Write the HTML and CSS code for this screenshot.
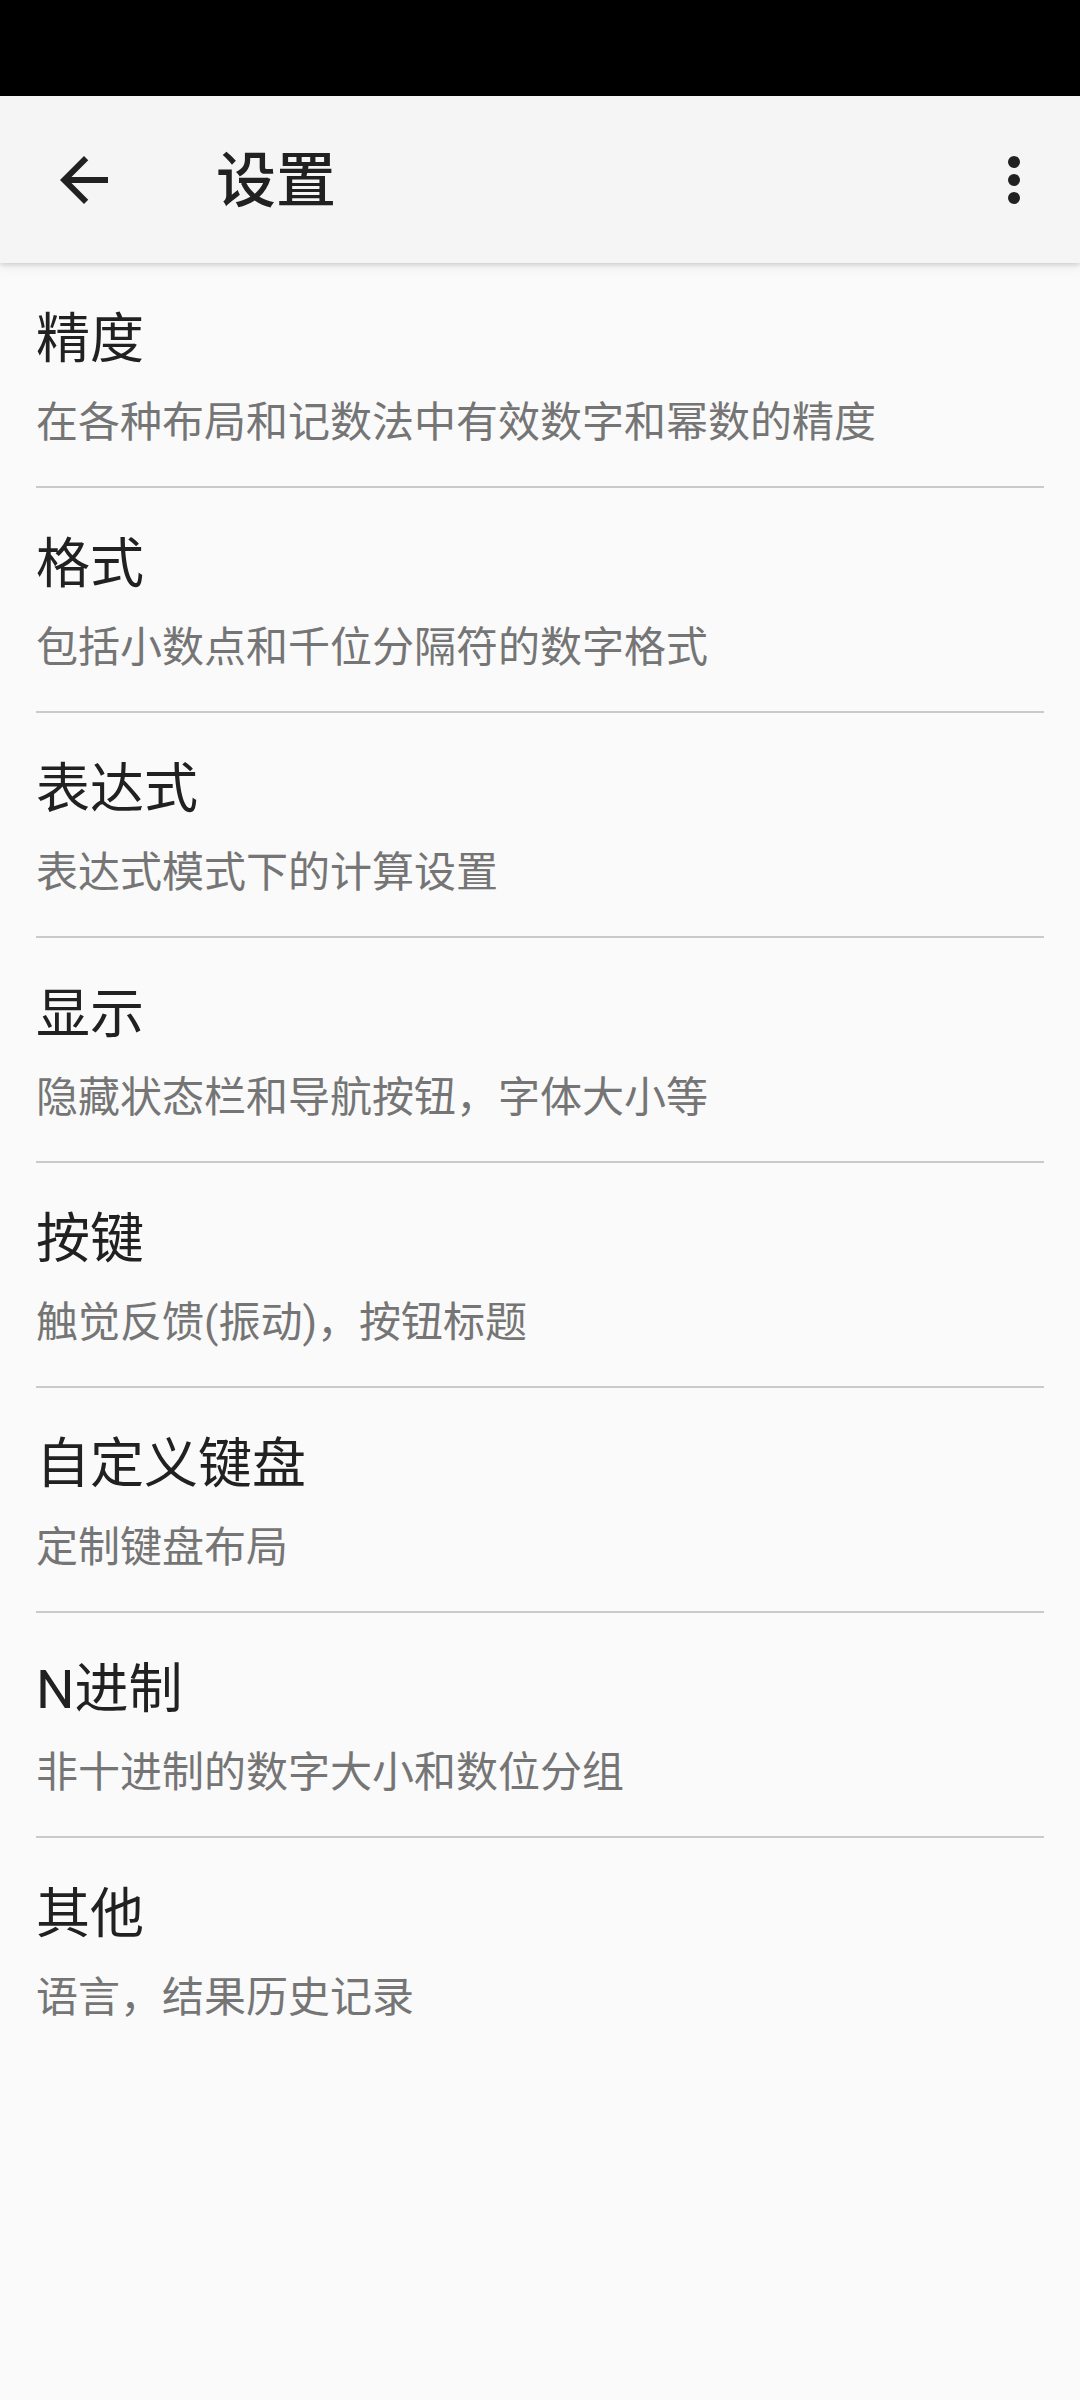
FILE: index.html
```html
<!DOCTYPE html>
<html lang="zh-CN">
<head>
    <meta charset="UTF-8">
    <meta name="viewport" content="width=device-width, initial-scale=1.0">
    <title>设置</title>
    <link rel="stylesheet" href="styles.css">
</head>
<body>
    <div class="status-bar"></div>

    <div class="app-bar">
        <button class="icon-btn back-btn" aria-label="返回">
            <svg viewBox="0 0 24 24" width="72" height="72">
                <path d="M20 11H7.83l5.59-5.59L12 4l-8 8 8 8 1.41-1.41L7.83 13H20v-2z" fill="#212121"/>
            </svg>
        </button>
        <h1 class="app-title">设置</h1>
        <button class="icon-btn more-btn" aria-label="更多">
            <svg viewBox="0 0 24 24" width="72" height="72">
                <circle cx="12" cy="6" r="2" fill="#212121"/>
                <circle cx="12" cy="12" r="2" fill="#212121"/>
                <circle cx="12" cy="18" r="2" fill="#212121"/>
            </svg>
        </button>
    </div>

    <ul class="settings-list">
        <li class="setting-item">
            <div class="setting-title">精度</div>
            <div class="setting-summary">在各种布局和记数法中有效数字和幂数的精度</div>
        </li>
        <li class="setting-item">
            <div class="setting-title">格式</div>
            <div class="setting-summary">包括小数点和千位分隔符的数字格式</div>
        </li>
        <li class="setting-item">
            <div class="setting-title">表达式</div>
            <div class="setting-summary">表达式模式下的计算设置</div>
        </li>
        <li class="setting-item">
            <div class="setting-title">显示</div>
            <div class="setting-summary">隐藏状态栏和导航按钮，字体大小等</div>
        </li>
        <li class="setting-item">
            <div class="setting-title">按键</div>
            <div class="setting-summary">触觉反馈(振动)，按钮标题</div>
        </li>
        <li class="setting-item">
            <div class="setting-title">自定义键盘</div>
            <div class="setting-summary">定制键盘布局</div>
        </li>
        <li class="setting-item">
            <div class="setting-title">N进制</div>
            <div class="setting-summary">非十进制的数字大小和数位分组</div>
        </li>
        <li class="setting-item">
            <div class="setting-title">其他</div>
            <div class="setting-summary">语言，结果历史记录</div>
        </li>
    </ul>
</body>
</html>
```

FILE: styles.css
```css
* {
    margin: 0;
    padding: 0;
    box-sizing: border-box;
}

html, body {
    background: #fafafa;
}

body {
    font-family: Roboto, "Noto Sans CJK SC", sans-serif;
    color: #212121;
    min-height: 2400px;
}

.status-bar {
    height: 96px;
    background: #000;
}

.app-bar {
    position: relative;
    z-index: 1;
    height: 167px;
    display: flex;
    align-items: center;
    background: #f5f5f5;
    box-shadow: 0 2px 4px rgba(0,0,0,0.12), 0 5px 10px rgba(0,0,0,0.06);
}

.icon-btn {
    width: 72px;
    height: 72px;
    border: none;
    background: none;
    display: flex;
    align-items: center;
    justify-content: center;
}

.back-btn {
    margin-left: 48px;
}

.app-title {
    flex: 1;
    margin-left: 96px;
    padding-top: 5px;
    font-size: 60px;
    font-weight: 500;
    line-height: 72px;
}

.more-btn {
    margin-right: 30px;
}

.settings-list {
    list-style: none;
    padding: 0 36px;
}

.setting-item {
    padding: 41px 0 35px;
    border-bottom: 2px solid #cacaca;
}

.setting-item:last-child {
    border-bottom: none;
}

.setting-title {
    font-size: 54px;
    line-height: 72px;
    color: #212121;
}

.setting-summary {
    margin-top: 19px;
    font-size: 42px;
    line-height: 56px;
    color: #757575;
}
```
